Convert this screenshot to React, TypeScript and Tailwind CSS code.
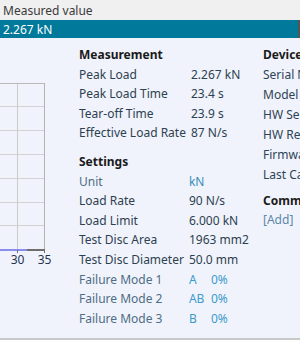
import React from "react";

const F = { fontFamily: '"Noto Sans", "Open Sans", Arial, sans-serif' };

function Chart() {
  const hs = [45, 68, 92, 116, 140, 164, 187];
  return (
    <svg width="79" height="300" className="shrink-0">
      {hs.slice(1).map((y) => (
        <line key={y} x1="0" x2="44" y1={y + 0.5} y2={y + 0.5} stroke="#d2d2d2" strokeWidth="1" />
      ))}
      <line x1="17.5" x2="17.5" y1="45" y2="212" stroke="#cbcbcb" strokeWidth="1" />
      <line x1="0" x2="44.5" y1="45.5" y2="45.5" stroke="#b9b9b9" strokeWidth="1" />
      <line x1="44.5" x2="44.5" y1="45" y2="214" stroke="#b4b4b4" strokeWidth="1" />
      <line x1="0" x2="27" y1="212" y2="212" stroke="#8a8cf0" strokeWidth="2" />
      <line x1="27" x2="45" y1="212" y2="212" stroke="#6e6e6e" strokeWidth="2" />
      <line x1="17.5" x2="17.5" y1="212" y2="215" stroke="#6e6e6e" strokeWidth="1" />
      <line x1="44.5" x2="44.5" y1="212" y2="215" stroke="#6e6e6e" strokeWidth="1" />
      <text x="17.5" y="226" textAnchor="middle" fontSize="12" fill="#1f3550" style={F}>30</text>
      <text x="44.5" y="226" textAnchor="middle" fontSize="12" fill="#1f3550" style={F}>35</text>
    </svg>
  );
}

const dark = "text-[#2e3f4f]";
const soft = "text-[#4f6c82]";

function Row({ label, value, lc = dark, vc = dark }: { label: string; value: React.ReactNode; lc?: string; vc?: string }) {
  return (
    <>
      <div className={`h-[19.6px] leading-[19.6px] whitespace-nowrap ${lc}`}>{label}</div>
      <div className={`h-[19.6px] leading-[19.6px] whitespace-nowrap ${vc}`}>{value}</div>
    </>
  );
}

function FM({ l, p }: { l: string; p: string }) {
  return (
    <span className="flex">
      <span className="w-[22px]">{l}</span>
      <span>{p}</span>
    </span>
  );
}

export default function App() {
  return (
    <div className="w-[300px] h-[340px] overflow-hidden text-[12px]" style={F}>
      <div className="h-[20px] bg-[#f0f0f0] px-[3px] leading-[21px] text-[#3a3a3a]">Measured value</div>
      <div className="h-[18px] bg-[#00799a] border-r-2 border-[#555555] px-[3px] leading-[19px] text-white">2.267 kN</div>
      <div className="flex h-[302px] bg-[#f0f3fc] border-b-2 border-[#c9c9c9]">
        <Chart />
        <div className="w-[184px] shrink-0 pt-[7px]">
          <div className="h-[19.6px] leading-[19.6px] font-bold text-[#1a1a1a]">Measurement</div>
          <div className="grid grid-cols-[auto_auto] justify-start gap-x-[5px]">
            <Row label="Peak Load" value="2.267 kN" />
            <Row label="Peak Load Time" value="23.4 s" />
            <Row label="Tear-off Time" value="23.9 s" />
            <Row label="Effective Load Rate" value="87 N/s" />
          </div>
          <div className="mt-[9px] h-[19.6px] leading-[19.6px] font-bold text-[#1a1a1a]">Settings</div>
          <div className="grid grid-cols-[auto_auto] justify-start gap-x-[5px]">
            <Row label="Unit" value="kN" lc={soft} vc="text-[#3a8cb8]" />
            <Row label="Load Rate" value="90 N/s" />
            <Row label="Load Limit" value="6.000 kN" />
            <Row label="Test Disc Area" value="1963 mm2" />
            <Row label="Test Disc Diameter" value="50.0 mm" />
            <Row label="Failure Mode 1" value={<FM l="A" p="0%" />} lc={soft} vc="text-[#3d9bcb]" />
            <Row label="Failure Mode 2" value={<FM l="AB" p="0%" />} lc={soft} vc="text-[#3d9bcb]" />
            <Row label="Failure Mode 3" value={<FM l="B" p="0%" />} lc={soft} vc="text-[#3d9bcb]" />
          </div>
        </div>
        <div className="flex-1 min-w-0 overflow-hidden whitespace-nowrap pt-[7px]">
          <div className="h-[19.6px] leading-[19.6px] font-bold text-[#1a1a1a]">Device</div>
          {["Serial Number", "Model", "HW Serial", "HW Revision", "Firmware", "Last Calibration"].map((t) => (
            <div key={t} className="h-[20px] leading-[20px] text-[#2e4454]">{t}</div>
          ))}
          <div className="mt-[6px] h-[19.6px] leading-[19.6px] font-bold text-[#1a1a1a]">Comments</div>
          <div className="h-[19.6px] leading-[19.6px] text-[#5a88a8]">[Add]</div>
        </div>
      </div>
    </div>
  );
}
